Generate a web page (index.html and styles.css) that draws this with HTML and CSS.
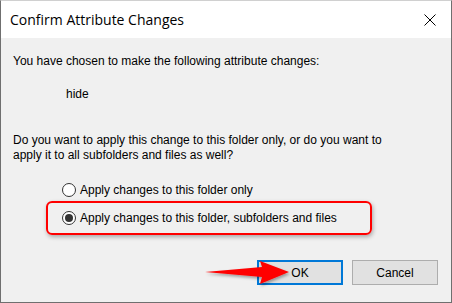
FILE: index.html
```html
<!DOCTYPE html>
<html lang="en">
<head>
    <meta charset="UTF-8">
    <title>Confirm Attribute Changes</title>
    <link rel="stylesheet" href="styles.css">
</head>
<body>
    <div class="dialog">
        <div class="titlebar">
            <span class="title">Confirm Attribute Changes</span>
            <svg class="close" width="12" height="12" viewBox="0 0 12 12">
                <path d="M0.5 0.5 L11.5 11.5 M11.5 0.5 L0.5 11.5" stroke="#000" stroke-width="1" fill="none"/>
            </svg>
        </div>
        <div class="content">
            <p class="intro">You have chosen to make the following attribute changes:</p>
            <p class="attr">hide</p>
            <p class="question">Do you want to apply this change to this folder only, or do you want to<br>apply it to all subfolders and files as well?</p>
            <div class="options">
                <label class="option">
                    <span class="radio"></span>
                    Apply changes to this folder only
                </label>
                <label class="option highlight">
                    <span class="radio checked"></span>
                    Apply changes to this folder, subfolders and files
                </label>
            </div>
            <div class="buttons">
                <button class="btn default">OK</button>
                <button class="btn">Cancel</button>
                <svg class="arrow" width="92" height="34" viewBox="0 0 92 34">
                    <defs>
                        <filter id="sh" x="-20%" y="-40%" width="140%" height="180%">
                            <feDropShadow dx="1" dy="2" stdDeviation="1.5" flood-color="#000" flood-opacity="0.35"/>
                        </filter>
                    </defs>
                    <path d="M2 17 L59 12 L57 6 L86 17 L57 29 L59 22 Z" fill="#f00" filter="url(#sh)"/>
                </svg>
            </div>
        </div>
    </div>
</body>
</html>
```

FILE: styles.css
```css
body {
    margin: 0;
    padding: 0;
    background-color: #fff;
}

.dialog {
    width: 452px;
    height: 303px;
    box-sizing: border-box;
    border: 1px solid #6f6f6f;
    border-top-color: #d0d0d0;
    background-color: #f0f0f0;
    display: flex;
    flex-direction: column;
}

.titlebar {
    height: 37px;
    background-color: #fff;
    display: flex;
    align-items: center;
    justify-content: space-between;
    padding: 0 15px 0 9px;
}

.title {
    font-family: "Open Sans", "Noto Sans", sans-serif;
    font-size: 14px;
    color: #000;
    margin-top: -1px;
}

.close {
    display: block;
}

.content {
    flex: 1;
    font-family: "Liberation Sans", Arial, sans-serif;
    font-size: 12px;
    color: #000;
    padding: 0 0 0 12px;
    position: relative;
}

.content p {
    margin: 0;
}

.intro {
    padding-top: 16px;
}

.attr {
    padding-top: 19px;
    padding-left: 53px;
}

.question {
    padding-top: 32px;
    line-height: 15px;
}

.options {
    margin-top: 17px;
    display: flex;
    flex-direction: column;
}

.option {
    display: flex;
    align-items: center;
    gap: 4px;
    height: 20px;
    margin-left: 49px;
}

.option.highlight {
    margin-left: 33px;
    margin-top: 1px;
    width: 326px;
    height: 34px;
    padding-left: 14px;
    box-sizing: border-box;
    border: 2px solid #f00;
    border-radius: 6px;
    box-shadow: 1px 2px 4px rgba(0, 0, 0, 0.3);
}

.radio {
    width: 12px;
    height: 12px;
    border: 1px solid #333;
    border-radius: 50%;
    background-color: #fff;
    position: relative;
}

.radio.checked::after {
    content: "";
    position: absolute;
    left: 2px;
    top: 2px;
    width: 8px;
    height: 8px;
    border-radius: 50%;
    background-color: #333;
}

.buttons {
    display: flex;
    justify-content: flex-end;
    gap: 9px;
    margin-top: 25px;
    padding-right: 13px;
    position: relative;
}

.btn {
    width: 86px;
    height: 25px;
    font-family: "Liberation Sans", Arial, sans-serif;
    font-size: 12px;
    color: #000;
    background-color: #e1e1e1;
    border: 1px solid #adadad;
    padding: 0;
}

.btn.default {
    border: 2px solid #0078d7;
}

.arrow {
    position: absolute;
    left: 190px;
    top: -5px;
}
```
